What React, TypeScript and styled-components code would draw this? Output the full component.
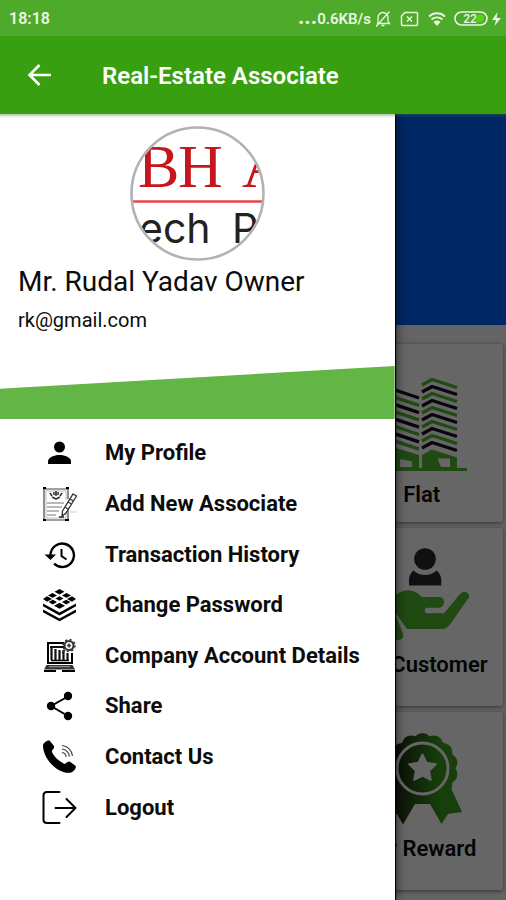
import React from "react";
import styled, { createGlobalStyle } from "styled-components";

const GlobalStyle = createGlobalStyle`
  *, *::before, *::after { box-sizing: border-box; }
  body { margin: 0; font-family: Roboto, "Liberation Sans", sans-serif; color: #0c0c0c; background: #fafafa; }
`;

const Screen = styled.div`
  display: flex;
  flex-direction: column;
  min-height: 100vh;
  overflow: hidden;
`;

const StatusBar = styled.div`
  display: flex;
  align-items: center;
  height: 36px;
  padding: 1px 4px 0 9px;
  background: #4daa2a;
  color: #eaf6e0;
`;

const Clock = styled.time`
  flex: 1;
  font-weight: 600;
  font-size: 16px;
`;

const StatusIcons = styled.div`
  display: flex;
  align-items: center;
  gap: 8px;
`;

const Traffic = styled.span`
  display: flex;
  align-items: center;
  gap: 3px;
  font-size: 15px;
  font-weight: 600;
`;

const Dots = styled.span`
  font-size: 22px;
  line-height: 16px;
  font-weight: 700;
`;

const AppBar = styled.header`
  display: flex;
  align-items: center;
  gap: 48px;
  height: 78px;
  padding: 2px 24px 0;
  background: #38a010;
  color: #fff;
`;

const BackButton = styled.button`
  display: flex;
  padding: 0;
  border: 0;
  background: none;
  color: inherit;
  cursor: pointer;
`;

const Title = styled.h1`
  margin: 0;
  font-size: 24px;
  line-height: 28px;
  font-weight: 600;
`;

const Main = styled.main`
  position: relative;
  flex: 1;
  overflow: hidden;
`;

const Banner = styled.div`
  height: 211px;
  background: #0062ff;
`;

const CardGrid = styled.section`
  display: grid;
  grid-template-columns: repeat(3, 1fr);
  grid-auto-rows: 178px;
  gap: 6px;
  padding: 19px 3px 8px;
`;

const Card = styled.a<{ $top: number }>`
  grid-column: 3;
  display: flex;
  flex-direction: column;
  align-items: center;
  gap: 10px;
  padding-top: ${(p) => p.$top}px;
  border-radius: 2px;
  background: #fff;
  box-shadow: 0 1px 4px rgba(0, 0, 0, 0.5);
  color: #0c0c0c;
  font-size: 22px;
  line-height: 28px;
  font-weight: 600;
  text-decoration: none;
  white-space: nowrap;
`;

const Scrim = styled.div`
  position: absolute;
  inset: 0;
  background: rgba(0, 0, 0, 0.6);
`;

const Drawer = styled.aside`
  position: absolute;
  inset: 0 auto 0 0;
  width: 78%;
  background: #fff;
  box-shadow: 1px 0 1px #000, 2px 0 10px rgba(0, 0, 0, 0.5);
`;

const TopShade = styled.div`
  position: absolute;
  inset: 0 0 auto;
  height: 4px;
  background: linear-gradient(rgba(60, 110, 50, 0.4), transparent);
`;

const Profile = styled.div`
  display: flex;
  flex-direction: column;
  padding: 12px 18px 0;
`;

const Avatar = styled.svg`
  align-self: center;
`;

const Name = styled.h2`
  margin: 4px 0 0;
  font-size: 28px;
  line-height: 34px;
  font-weight: 400;
`;

const Email = styled.p`
  margin: 8px 0 0;
  font-size: 20px;
  line-height: 26px;
`;

const Slope = styled.div`
  height: 53px;
  margin-top: 33px;
  background: #63b545;
  clip-path: polygon(0 43%, 100% 0, 100% 100%, 0 100%);
`;

const Menu = styled.ul`
  display: grid;
  grid-auto-rows: 1fr;
  height: 405px;
  margin: 9px 0 0;
  padding: 0;
  list-style: none;
`;

const MenuButton = styled.button`
  display: flex;
  align-items: center;
  gap: 27px;
  width: 100%;
  height: 100%;
  padding: 0 0 0 42px;
  border: 0;
  background: none;
  color: #0c0c0c;
  font: 700 22px/28px Roboto, "Liberation Sans", sans-serif;
  text-align: left;
  white-space: nowrap;
  cursor: pointer;
`;

const MenuIcon = styled.svg.attrs({ width: 36, height: 36, viewBox: "0 0 36 36", fill: "none", stroke: "#000", "aria-hidden": true })`
  flex: none;
`;

const ProfileIcon = () => (
  <MenuIcon>
    <g fill="#000" stroke="none">
      <circle cx="17.5" cy="12" r="5.5" />
      <path d="M6 29v-2.500c0-4 6-6.500 11.500-6.500s11.500 2.500 11.500 6.500V29z" />
    </g>
  </MenuIcon>
);

const CertificateIcon = () => (
  <MenuIcon strokeWidth="1">
    <path d="M2 3h24v10M26 24v10H2V3" stroke="#444" strokeWidth="1.200" />
    <path d="M4 5h20v9M24 26v6H4V5" stroke="#bbb" />
    <path d="M1 2h3M24 2h3M1 34h3M23 34h4" strokeWidth="1.800" />
    <path d="M8 7l2 3M20 7l-2 3M10 11l4 2 4-2M14 5v5M12 6v3M16 6v3" strokeWidth="1.600" stroke="#333" />
    <path d="M5 17h17M5 21h15M5 25h12M5 29h9" stroke="#777" strokeWidth="1.200" />
    <path d="M17 31h5" stroke="#222" strokeWidth="1.500" />
    <path d="M31 8l3.500 2L24 27l-4 3 .5-5z" fill="#fff" stroke="#333" strokeWidth="1.300" />
    <path d="M28 13l3.500 2M26 16l3.500 2M23 21l3 2" stroke="#333" strokeWidth="1.200" />
    <path d="M28 26h7" stroke="#ccc" />
  </MenuIcon>
);

const HistoryIcon = () => (
  <MenuIcon strokeWidth="2.400">
    <path d="M8.500 18a11.700 11.700 0 1 1 3.600 8.700" />
    <path d="M2.500 17.500h11.500L8.500 23z" fill="#000" stroke="none" />
    <path d="M19.500 12v7l5 3.500" strokeWidth="2" />
  </MenuIcon>
);

const LayersIcon = () => (
  <MenuIcon>
    <g fill="#000" stroke="none">
      <path d="M17.500 2l5 2.700-5 2.700-5-2.700zM10.500 6l4.500 2.400-4.500 2.400L6 8.400zM24.500 6L29 8.400l-4.500 2.400L20 8.400zM17.500 9.300l4 2.200-4 2.200-4-2.200zM5 9.300l5 2.700-5 2.700-4-2.700zM30 9.300l4 2.700-4 2.700-5-2.700zM10.800 12.800l4.200 2.300-4.200 2.300-4.200-2.300zM24.200 12.800l4.200 2.300-4.200 2.300-4.200-2.300zM17.500 15.800l5.500 2.900-5.500 3-5.500-3z" />
      <path d="M1 16.500l16.500 9L34 16.500v2.700L17.500 28.500 1 19.200zM1 22.500l16.500 9L34 22.500v2.700l-16.500 9L1 25.200z" />
    </g>
  </MenuIcon>
);

const LaptopIcon = () => (
  <MenuIcon>
    <path d="M22 5H6v20h24V15" strokeWidth="2" />
    <path d="M8 9h14M9.500 9v13M13.500 11v11M17.500 12v10M21.500 12v10M25.500 15v7" strokeWidth="2.200" stroke="#111" />
    <path d="M9 22.500h18" strokeWidth="1.500" />
    <circle cx="27" cy="7.500" r="4.500" stroke="#333" strokeWidth="2" />
    <circle cx="27" cy="7.500" r="6" stroke="#333" strokeWidth="1.500" strokeDasharray="2 2.700" />
    <path d="M23 12l-3 3M25 7.500h4M27 5.500v4" stroke="#333" strokeWidth="1.500" />
    <path d="M4.500 27h26l2.500 4.500h-31z" fill="#333" stroke="none" />
    <path d="M7 28.700h21" stroke="#bbb" strokeWidth=".8" />
    <path d="M2 33h12M20 33h13" strokeWidth="1.800" />
  </MenuIcon>
);

const ShareIcon = () => (
  <MenuIcon strokeWidth="2">
    <path d="M26 8.500L9 18l17 10" />
    <g fill="#000" stroke="none">
      <circle cx="26" cy="8" r="4.200" />
      <circle cx="9" cy="18" r="4.200" />
      <circle cx="26" cy="28" r="4.200" />
    </g>
  </MenuIcon>
);

const PhoneIcon = () => (
  <MenuIcon strokeWidth="1.200">
    <path
      d="M1 6.500C1 4 5 1 7.500 1.500L12 7c.8 1.500-.8 3.500-2.300 5C11 17 17.500 23 23 25c2-2 3.500-3 5-2.300l5.500 4c1.500 1.500-1.500 6-5 7C16 35.500 1 20 1 6.500z"
      fill="#000"
      stroke="none"
    />
    <g stroke="#444">
      <path d="M20 13.500a4.500 4.500 0 0 1 4 4.500M20 10a8 8 0 0 1 7.300 7.500M20 6.500a11.500 11.500 0 0 1 10.500 10.500" />
    </g>
  </MenuIcon>
);

const LogoutIcon = () => (
  <MenuIcon strokeWidth="2" strokeLinecap="round" strokeLinejoin="round">
    <path d="M17.500 2H5C3 2 1.500 3.500 1.500 5.500v24c0 2 1.500 3.500 3.500 3.500h12.500" />
    <path d="M13.500 18h20M24.500 9l9 9-9 9" />
  </MenuIcon>
);

const menuItems = [
  { label: "My Profile", Icon: ProfileIcon },
  { label: "Add New Associate", Icon: CertificateIcon },
  { label: "Transaction History", Icon: HistoryIcon },
  { label: "Change Password", Icon: LayersIcon },
  { label: "Company Account Details", Icon: LaptopIcon },
  { label: "Share", Icon: ShareIcon },
  { label: "Contact Us", Icon: PhoneIcon },
  { label: "Logout", Icon: LogoutIcon },
];

const CardArt = styled.svg.attrs({ width: 96, height: 96, viewBox: "0 0 96 96", "aria-hidden": true })`
  flex: none;
`;

const GREEN = "#50b82c";
const BLACK = "#161020";

const FlatArt = () => (
  <CardArt fill="none" strokeWidth="3.400">
    {Array.from({ length: 10 }, (_, i) => (
      <path key={i} d={`M48 ${10 + i * 7}l10-5.500 25 8`} stroke={i % 2 ? BLACK : GREEN} />
    ))}
    {Array.from({ length: 8 }, (_, i) => (
      <path key={i} d={`M4 ${16 + i * 7.3}l8-4 33 11`} stroke={i % 2 ? GREEN : BLACK} />
    ))}
    <path d="M0 93h4V74l8-4 33 10v13h3V80l10-5.500 25 8V93h10v3H0z" fill={GREEN} />
    <path d="M26 84l12 2.500V92H26zM63.500 83.500H76V92H67z" fill="#fff" />
  </CardArt>
);

const CustomerArt = () => (
  <CardArt>
    <g fill="#2a2a2e">
      <circle cx="51" cy="14" r="10.800" />
      <path d="M35 40.500V35c0-4 1.500-7 4.500-9.500 6.500 6 16.500 6 23 0 3 2.500 4.800 5.500 4.800 9.500v5.500z" />
    </g>
    <g fill={GREEN}>
      <path d="M14 57l9-8c9-6 18-4.500 25 3h17c3 0 5 2 5 5s-2 5.700-5 5.700H53c-3 0-3 5.500 0 5.500h17L86 49c4-4.500 11-1 8.500 4L77 78c-3 4-5 6-9 6H33z" />
      <path d="M8 64l10-3 11 28c1 3-1 6-5 6h-8z" />
    </g>
  </CardArt>
);

const polar = (r: number, turn: number) =>
  `${(48.5 + r * Math.sin(turn * 2 * Math.PI)).toFixed(2)} ${(39.5 - r * Math.cos(turn * 2 * Math.PI)).toFixed(2)}`;

const SCALLOPS = 14;
const rosette =
  `M${polar(33, -0.5 / SCALLOPS)}` +
  Array.from({ length: SCALLOPS }, (_, i) => `Q${polar(39, i / SCALLOPS)} ${polar(33, (i + 0.5) / SCALLOPS)}`).join("") +
  "Z";
const star = "M" + Array.from({ length: 10 }, (_, i) => polar(i % 2 ? 7 : 14, i / 10)).join("L") + "Z";

const RewardArt = () => (
  <CardArt>
    <defs>
      <linearGradient id="ribbon" x1="0" x2="1">
        <stop offset=".15" stopColor="#1c3018" />
        <stop offset=".75" stopColor="#3c9c1c" />
      </linearGradient>
    </defs>
    <g fill="url(#ribbon)">
      <path d="M20 60L9 83l14 2 6 10.500L41 75h15l11.500 20L74 85l14-2-11-24z" />
      <path d={rosette} />
    </g>
    <circle cx="48.500" cy="39.500" r="25.500" fill="none" stroke="#fff" strokeWidth="3" />
    <path d={star} fill="#fff" stroke="#fff" strokeWidth="2" strokeLinejoin="round" />
  </CardArt>
);

const cards = [
  { label: "Flat", Art: FlatArt, top: 31 },
  { label: "My Customer", Art: CustomerArt, top: 17 },
  { label: "My Reward", Art: RewardArt, top: 17 },
];

export default function App() {
  return (
    <Screen>
      <GlobalStyle />
      <StatusBar>
        <Clock>18:18</Clock>
        <StatusIcons>
          <Traffic>
            <span>
              <Dots>...</Dots>0.6KB/s
            </span>
            <svg width="18" height="18" viewBox="0 0 18 18" fill="none" stroke="#eaf6e0" strokeWidth="1.300" aria-label="Muted">
              <path d="M3.500 13.500h12l-1.500-2V7.500a5 5 0 0 0-10 0v4zM7.500 15.500h3M2 16.500L15.500 1.500" />
            </svg>
          </Traffic>
          <svg width="20" height="16" viewBox="0 0 20 16" fill="none" stroke="#eaf6e0" strokeWidth="1.500" aria-label="No SIM">
            <path d="M5 1.500h11.500a1 1 0 0 1 1 1v11a1 1 0 0 1-1 1h-14a1 1 0 0 1-1-1V5z" />
            <path d="M7 5.500l5 5M12 5.500l-5 5" />
          </svg>
          <svg width="18" height="16" viewBox="0 0 18 16" fill="none" stroke="#eaf6e0" strokeWidth="1.800" aria-label="Wi-Fi">
            <path d="M1 5.500a11.500 11.500 0 0 1 16 0M3.500 8.500a8 8 0 0 1 11 0" />
            <path d="M9 15L5.500 11a5 5 0 0 1 7 0z" fill="#eaf6e0" stroke="none" />
          </svg>
          <svg width="48" height="18" viewBox="0 0 48 18" aria-label="Battery 22 percent">
            <rect x="1" y="2" width="32" height="13" rx="6.500" fill="none" stroke="#eaf6e0" strokeWidth="1.600" />
            <rect x="22" y="4.500" width="8" height="8" rx="4" fill="#55d01c" />
            <text x="16" y="13" textAnchor="middle" fontSize="12" fontWeight="500" fill="#eaf6e0">22</text>
            <path d="M43.500 2L38 10h4l-1.500 6L47 8h-4.300z" fill="#eaf6e0" />
          </svg>
        </StatusIcons>
      </StatusBar>
      <AppBar>
        <BackButton aria-label="Back">
          <svg width="30" height="30" viewBox="0 0 30 30" fill="none" stroke="currentColor" strokeWidth="2.600">
            <path d="M27 14H6M15.500 4L5.500 14l10 10" />
          </svg>
        </BackButton>
        <Title>Real-Estate Associate</Title>
      </AppBar>
      <Main>
        <Banner />
        <CardGrid>
          {cards.map(({ label, Art, top }) => (
            <Card key={label} href="#" $top={top}>
              <Art />
              {label}
            </Card>
          ))}
        </CardGrid>
        <Scrim />
        <Drawer>
          <Profile>
            <Avatar width="135" height="135" viewBox="0 0 135 135" aria-label="Profile picture">
              <defs>
                <clipPath id="round">
                  <circle cx="67.500" cy="67.500" r="65" />
                </clipPath>
              </defs>
              <g clipPath="url(#round)">
                <g fontFamily="'Liberation Serif', serif" fontSize="62" fill="#c4161c">
                  <text x="8" y="61">B</text>
                  <text x="48" y="61">H</text>
                  <text x="112" y="61">A</text>
                </g>
                <path d="M0 75.500h135" stroke="#e8434b" strokeWidth="2.600" />
                <g fontFamily="Inter, sans-serif" fontSize="41" fill="#222">
                  <text x="9" y="117">ech</text>
                  <text x="102" y="117">P</text>
                </g>
              </g>
              <circle cx="67.500" cy="67.500" r="66" fill="none" stroke="#b2b2b2" strokeWidth="2.600" />
            </Avatar>
            <Name>Mr. Rudal Yadav Owner</Name>
            <Email>rk@gmail.com</Email>
          </Profile>
          <Slope />
          <nav>
            <Menu>
              {menuItems.map(({ label, Icon }) => (
                <li key={label}>
                  <MenuButton>
                    <Icon />
                    {label}
                  </MenuButton>
                </li>
              ))}
            </Menu>
          </nav>
        </Drawer>
        <TopShade />
      </Main>
    </Screen>
  );
}
